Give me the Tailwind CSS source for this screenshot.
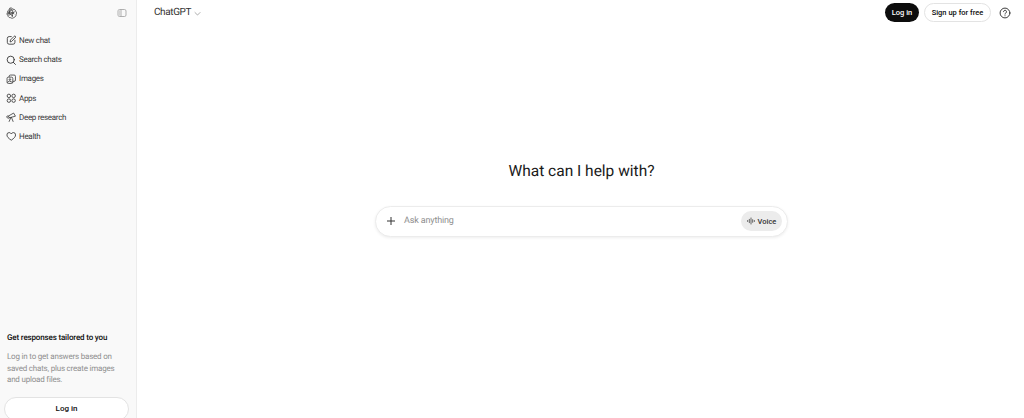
<!DOCTYPE html>
<html lang="en">
<head>
    <meta charset="utf-8">
    <title>ChatGPT</title>
    <script src="https://cdn.jsdelivr.net/npm/@tailwindcss/browser@4"></script>
</head>
<body class="overflow-hidden bg-white font-['Roboto',sans-serif] text-[#0d0d0d] antialiased [text-rendering:geometricPrecision]">
    <div class="flex h-[418px] w-[1024px] overflow-hidden">
        <!-- sidebar -->
        <aside class="flex w-[137px] shrink-0 flex-col border-r border-[#ececec] bg-[#f9f9f9]">
            <div class="flex h-[25px] items-center justify-between pl-[5px] pr-[9px]">
                <svg class="h-[12px] w-[12px]" viewBox="0 0 24 24" fill="none" stroke="#444" stroke-width="1.700" stroke-linejoin="round">
                    <path d="M9.500 2.300c2.600-1 5.200 0 6.500 2.200 2.600-.3 4.900 1.400 5.400 4 2 1.700 2.300 4.600.7 6.800.2 2.600-1.500 4.900-4.100 5.400-1.700 2-4.600 2.300-6.800.7-2.600.2-4.900-1.500-5.400-4.100-2-1.700-2.300-4.600-.7-6.800-.2-2.600 1.500-4.900 4.100-5.400z"/>
                    <path d="M8 17.500V9.200l6.700-3.900M16 17.800l-7-4V6.500M19.500 9.500l-7 4-6.800-4M4.500 14l7-4 7 4M14.500 20v-7.800M9.500 3.500l6 3.500v6.500"/>
                </svg>
                <svg class="h-[10px] w-[10px]" viewBox="0 0 20 20" fill="none" stroke="#a3a3a3" stroke-width="1.700">
                    <rect x="2" y="3" width="16" height="14" rx="3"/>
                    <path d="M8 3v14"/>
                    <path d="M2.500 4.500h5.500v11h-5.500z" fill="#d4d4d4" stroke="none"/>
                </svg>
            </div>
            <nav class="mt-[6px] flex flex-col text-[8px] leading-[19.2px] tracking-[-0.3px] text-[#3a3a3a]">
                <a class="flex h-[19.2px] items-center gap-[3px] pl-[5.500px]">
                    <svg class="h-[10.500px] w-[10.500px] shrink-0" viewBox="0 0 20 20" fill="none" stroke="#333" stroke-width="1.600" stroke-linecap="round" stroke-linejoin="round">
                        <path d="M10 3H6a3.500 3.500 0 0 0-3.500 3.500v7.500A3.500 3.500 0 0 0 6 17.500h7.500A3.500 3.500 0 0 0 17 14v-4"/>
                        <path d="M8 12.500l.5-3 7-7a1.600 1.600 0 0 1 2.500 2.500l-7 7z"/>
                    </svg>
                    New chat
                </a>
                <a class="flex h-[19.2px] items-center gap-[3px] pl-[5.500px]">
                    <svg class="h-[10.500px] w-[10.500px] shrink-0" viewBox="0 0 20 20" fill="none" stroke="#333" stroke-width="1.700" stroke-linecap="round">
                        <circle cx="9" cy="9" r="6.800"/>
                        <path d="M14 14l4 4"/>
                    </svg>
                    Search chats
                </a>
                <a class="flex h-[19.2px] items-center gap-[3px] pl-[5.500px]">
                    <svg class="h-[10.500px] w-[10.500px] shrink-0" viewBox="0 0 20 20" fill="none" stroke="#333" stroke-width="1.500" stroke-linejoin="round">
                        <rect x="2" y="6" width="11" height="12" rx="2.500"/>
                        <path d="M6 6V4.500A2.500 2.500 0 0 1 8.500 2h7A2.500 2.500 0 0 1 18 4.500v7a2.500 2.500 0 0 1-2.500 2.500H13"/>
                        <circle cx="7.500" cy="10.500" r="1.500"/>
                        <path d="M2.500 16l4-2.500 6 2.500"/>
                    </svg>
                    Images
                </a>
                <a class="flex h-[19.2px] items-center gap-[3px] pl-[5.500px]">
                    <svg class="h-[10.500px] w-[10.500px] shrink-0" viewBox="0 0 20 20" fill="none" stroke="#333" stroke-width="1.600">
                        <circle cx="5.500" cy="5.500" r="3.300"/>
                        <circle cx="14.500" cy="5.500" r="3.300"/>
                        <circle cx="5.500" cy="14.500" r="3.300"/>
                        <circle cx="14.500" cy="14.500" r="3.300"/>
                    </svg>
                    Apps
                </a>
                <a class="flex h-[19.2px] items-center gap-[3px] pl-[5.500px]">
                    <svg class="h-[10.500px] w-[10.500px] shrink-0" viewBox="0 0 20 20" fill="none" stroke="#333" stroke-width="1.500" stroke-linecap="round" stroke-linejoin="round">
                        <path d="M1.500 9.500l2 2.500 3-1.200-2-3z"/>
                        <path d="M5 7.500l9.500-5.500 3.500 6-11.500 3"/>
                        <path d="M9 11l-3 7M10.500 10.500l3 7.500"/>
                    </svg>
                    Deep research
                </a>
                <a class="flex h-[19.2px] items-center gap-[3px] pl-[5.500px]">
                    <svg class="h-[10.500px] w-[10.500px] shrink-0" viewBox="0 0 20 20" fill="none" stroke="#333" stroke-width="1.600" stroke-linejoin="round">
                        <path d="M10 17.500C4.500 13.800 1.800 11 1.800 7.500A4.300 4.300 0 0 1 6 3c1.700 0 3.100.9 4 2.500C10.900 3.900 12.300 3 14 3a4.300 4.300 0 0 1 4.200 4.500c0 3.500-2.700 6.300-8.200 10z"/>
                    </svg>
                    Health
                </a>
            </nav>
            <div class="mt-auto pl-[7px] text-[8px]">
                <p class="font-medium leading-[12.500px] tracking-[-0.15px] text-[#0d0d0d]">Get responses tailored to you</p>
                <p class="mt-[6px] w-[112px] leading-[11.700px] tracking-[-0.2px] text-[#8f8f8f]">Log in to get answers based on saved chats, plus create images and upload files.</p>
            </div>
            <button class="mx-[4px] mb-[-3px] mt-[11px] h-[24px] w-[125px] shrink-0 rounded-full border border-[#e3e3e3] bg-white text-[8px] font-medium">Log in</button>
        </aside>

        <!-- main -->
        <main class="flex min-w-0 flex-1 flex-col">
            <header class="flex h-[25px] items-center justify-between pl-[17px] pr-[13px]">
                <div class="flex items-center gap-[3px] text-[10px] tracking-[-0.4px] text-[#333]">
                    ChatGPT
                    <svg class="mt-[1px] h-[7px] w-[7px]" viewBox="0 0 10 10" fill="none" stroke="#8a8a8a" stroke-width="1">
                        <path d="M1 3.200l4 4 4-4"/>
                    </svg>
                </div>
                <div class="flex items-center text-[7.500px] font-medium">
                    <button class="h-[19px] w-[34px] rounded-full bg-[#0d0d0d] text-white">Log in</button>
                    <button class="ml-[5px] h-[19px] w-[67px] rounded-full border border-[#e3e3e3] bg-white">Sign up for free</button>
                    <svg class="ml-[8px] h-[12px] w-[12px]" viewBox="0 0 20 20" fill="none" stroke="#333" stroke-width="1.600" stroke-linecap="round">
                        <circle cx="10" cy="10" r="8.200"/>
                        <path d="M7.500 7.800a2.500 2.500 0 1 1 3.800 2.200c-.9.500-1.300 1-1.300 1.800"/>
                        <path d="M10 14.600v.1"/>
                    </svg>
                </div>
            </header>
            <div class="mt-[136px] flex flex-col items-center pl-[2px]">
                <h1 class="text-[15.500px] leading-[20px] text-[#1a1a1a]">What can I help with?</h1>
                <div class="mt-[25px] flex h-[30.500px] w-[413px] items-center rounded-full border border-[#ececec] bg-white pl-[10px] pr-[5px] shadow-[0_1px_3px_rgba(0,0,0,0.07)]">
                    <svg class="h-[10px] w-[10px]" viewBox="0 0 10 10" fill="none" stroke="#333" stroke-width="1">
                        <path d="M5 1v8M1 5h8"/>
                    </svg>
                    <span class="ml-[8px] text-[9px] tracking-[-0.15px] text-[#8f8f8f]">Ask anything</span>
                    <button class="ml-auto flex h-[20px] w-[41px] items-center justify-center gap-[3px] rounded-full bg-[#ececec] text-[7.500px] font-medium text-[#333]">
                        <svg class="h-[8px] w-[8px]" viewBox="0 0 12 12" fill="none" stroke="#333" stroke-width="1.100" stroke-linecap="round">
                            <path d="M1 5.200v1.600M3.500 3.500v5M6 1.500v9M8.500 4v4M11 5.200v1.600"/>
                        </svg>
                        Voice
                    </button>
                </div>
            </div>
        </main>
    </div>
</body>
</html>
